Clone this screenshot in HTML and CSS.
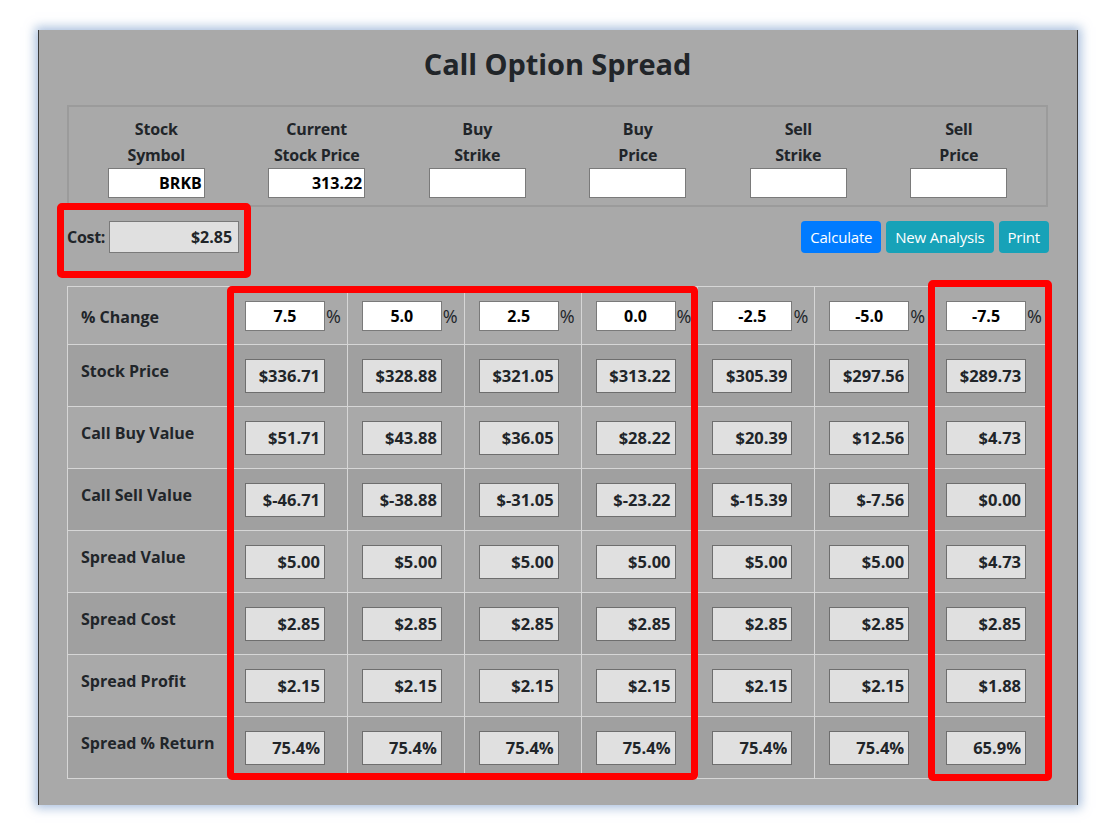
FILE: index.html
```html
<!DOCTYPE html>
<html>
<head>
<meta charset="utf-8">
<link rel="stylesheet" href="styles.css">
</head>
<body>
<div class="window">
  <h2 class="title">Call Option Spread</h2>
  <fieldset class="inputs">
    <div class="field"><label>Stock<br>Symbol</label><input class="in" type="text" value="BRKB"></div>
    <div class="field"><label>Current<br>Stock Price</label><input class="in" type="text" value="313.22"></div>
    <div class="field"><label>Buy<br>Strike</label><input class="in" type="text" value=""></div>
    <div class="field"><label>Buy<br>Price</label><input class="in" type="text" value=""></div>
    <div class="field"><label>Sell<br>Strike</label><input class="in" type="text" value=""></div>
    <div class="field"><label>Sell<br>Price</label><input class="in" type="text" value=""></div>
  </fieldset>
  <div class="costrow">
    <div class="cost"><label>Cost:</label><input class="costin" type="text" value="$2.85" readonly></div>
    <div class="buttons">
      <button class="btn primary">Calculate</button>
      <button class="btn info">New Analysis</button>
      <button class="btn info">Print</button>
    </div>
  </div>
  <table class="grid">
    <thead>
      <tr>
        <th>% Change</th>
        <td><input class="pct" value="7.5"><span class="pc">%</span></td>
        <td><input class="pct" value="5.0"><span class="pc">%</span></td>
        <td><input class="pct" value="2.5"><span class="pc">%</span></td>
        <td><input class="pct" value="0.0"><span class="pc">%</span></td>
        <td><input class="pct" value="-2.5"><span class="pc">%</span></td>
        <td><input class="pct" value="-5.0"><span class="pc">%</span></td>
        <td><input class="pct" value="-7.5"><span class="pc">%</span></td>
      </tr>
    </thead>
    <tbody>
      <tr>
        <th>Stock Price</th>
        <td><input class="val" value="$336.71" readonly></td>
        <td><input class="val" value="$328.88" readonly></td>
        <td><input class="val" value="$321.05" readonly></td>
        <td><input class="val" value="$313.22" readonly></td>
        <td><input class="val" value="$305.39" readonly></td>
        <td><input class="val" value="$297.56" readonly></td>
        <td><input class="val" value="$289.73" readonly></td>
      </tr>
      <tr>
        <th>Call Buy Value</th>
        <td><input class="val" value="$51.71" readonly></td>
        <td><input class="val" value="$43.88" readonly></td>
        <td><input class="val" value="$36.05" readonly></td>
        <td><input class="val" value="$28.22" readonly></td>
        <td><input class="val" value="$20.39" readonly></td>
        <td><input class="val" value="$12.56" readonly></td>
        <td><input class="val" value="$4.73" readonly></td>
      </tr>
      <tr>
        <th>Call Sell Value</th>
        <td><input class="val" value="$-46.71" readonly></td>
        <td><input class="val" value="$-38.88" readonly></td>
        <td><input class="val" value="$-31.05" readonly></td>
        <td><input class="val" value="$-23.22" readonly></td>
        <td><input class="val" value="$-15.39" readonly></td>
        <td><input class="val" value="$-7.56" readonly></td>
        <td><input class="val" value="$0.00" readonly></td>
      </tr>
      <tr>
        <th>Spread Value</th>
        <td><input class="val" value="$5.00" readonly></td>
        <td><input class="val" value="$5.00" readonly></td>
        <td><input class="val" value="$5.00" readonly></td>
        <td><input class="val" value="$5.00" readonly></td>
        <td><input class="val" value="$5.00" readonly></td>
        <td><input class="val" value="$5.00" readonly></td>
        <td><input class="val" value="$4.73" readonly></td>
      </tr>
      <tr>
        <th>Spread Cost</th>
        <td><input class="val" value="$2.85" readonly></td>
        <td><input class="val" value="$2.85" readonly></td>
        <td><input class="val" value="$2.85" readonly></td>
        <td><input class="val" value="$2.85" readonly></td>
        <td><input class="val" value="$2.85" readonly></td>
        <td><input class="val" value="$2.85" readonly></td>
        <td><input class="val" value="$2.85" readonly></td>
      </tr>
      <tr>
        <th>Spread Profit</th>
        <td><input class="val" value="$2.15" readonly></td>
        <td><input class="val" value="$2.15" readonly></td>
        <td><input class="val" value="$2.15" readonly></td>
        <td><input class="val" value="$2.15" readonly></td>
        <td><input class="val" value="$2.15" readonly></td>
        <td><input class="val" value="$2.15" readonly></td>
        <td><input class="val" value="$1.88" readonly></td>
      </tr>
      <tr>
        <th>Spread % Return</th>
        <td><input class="val" value="75.4%" readonly></td>
        <td><input class="val" value="75.4%" readonly></td>
        <td><input class="val" value="75.4%" readonly></td>
        <td><input class="val" value="75.4%" readonly></td>
        <td><input class="val" value="75.4%" readonly></td>
        <td><input class="val" value="75.4%" readonly></td>
        <td><input class="val" value="65.9%" readonly></td>
      </tr>
    </tbody>
  </table>
</div>
<div class="mark mark-cost"></div>
<div class="mark mark-mid"></div>
<div class="mark mark-right"></div>
</body>
</html>
```

FILE: styles.css
```css
* { box-sizing: border-box; }
html, body { margin: 0; padding: 0; background: #ffffff; }
body {
  font-family: "Open Sans", "Noto Sans", "Liberation Sans", sans-serif;
  color: #212529;
  position: relative;
  width: 1113px;
  height: 836px;
  overflow: hidden;
}
.window {
  margin: 30px 0 0 38px;
  width: 1040px;
  height: 775px;
  background: #a9a9a9;
  border-left: 1px solid #3a3a3a;
  border-right: 1px solid #3a3a3a;
  box-shadow: 0 0 10px 3px rgba(140, 170, 210, 0.75);
  padding: 0 29px 0 28px;
  overflow: hidden;
}
.title {
  margin: 0;
  padding-top: 15px;
  height: 75px;
  text-align: center;
  font-size: 29px;
  line-height: 38px;
  font-weight: 700;
  letter-spacing: -0.1px;
}
.inputs {
  margin: 0;
  height: 102px;
  border: 2px solid #9b9b9b;
  padding: 9px 7px 0 7px;
  display: grid;
  grid-template-columns: repeat(6, 1fr);
}
.field {
  display: flex;
  flex-direction: column;
  align-items: center;
}
.field label {
  font-weight: 700;
  font-size: 16px;
  line-height: 26px;
  text-align: center;
  letter-spacing: -0.2px;
}
.in {
  width: 97px;
  height: 30px;
  border: 1px solid #7a7a7a;
  background: #ffffff;
  font-family: inherit;
  font-weight: 700;
  font-size: 16px;
  color: #000;
  text-align: right;
  padding: 0 2px;
}
.costrow {
  display: flex;
  justify-content: space-between;
  align-items: center;
  height: 79px;
  padding-bottom: 20px;
}
.cost {
  display: flex;
  align-items: center;
  gap: 4px;
}
.cost label {
  font-weight: 700;
  font-size: 16px;
  letter-spacing: -0.3px;
}
.costin {
  width: 130px;
  height: 32px;
  background: #e0e0e0;
  border: 1px solid #7a7a7a;
  font-family: inherit;
  font-weight: 700;
  font-size: 16px;
  color: #212529;
  text-align: right;
  padding: 0 6px;
}
.buttons {
  display: flex;
  gap: 5px;
  margin-right: -1px;
}
.btn {
  border: 0;
  border-radius: 4px;
  color: #ffffff;
  font-family: inherit;
  font-size: 15px;
  height: 32px;
  padding: 0 9px;
  letter-spacing: -0.2px;
}
.primary { background: #007bff; }
.info { background: #17a2b8; }
.grid {
  border-collapse: collapse;
  width: 982px;
  table-layout: fixed;
}
.grid th, .grid td {
  border: 1px solid #d6d6d6;
}
.grid th {
  width: 163px;
  text-align: left;
  font-size: 16px;
  font-weight: 700;
  line-height: 24px;
  padding: 14px 13px 0 13px;
  vertical-align: top;
}
.grid td {
  padding: 0 0 0 14px;
  vertical-align: middle;
  white-space: nowrap;
  font-size: 16px;
}
.grid thead tr { height: 58px; }
.grid thead th { padding-top: 18px; }
.grid tbody tr { height: 62px; }
.grid tbody tr:nth-child(odd) { background: #a0a0a0; }
.pct {
  width: 80px;
  height: 30px;
  border: 1px solid #7a7a7a;
  background: #fff;
  font-family: inherit;
  font-weight: 700;
  font-size: 16px;
  color: #000;
  text-align: center;
  padding: 0;
  vertical-align: middle;
}
.pc {
  font-size: 18px;
  margin-left: 1px;
  vertical-align: middle;
  color: #212529;
}
.val {
  width: 80px;
  height: 34px;
  border: 1px solid #6e6e6e;
  background: #e0e0e0;
  font-family: inherit;
  font-weight: 700;
  font-size: 16.5px;
  color: #212529;
  text-align: right;
  padding: 0 4px;
}
.mark {
  position: absolute;
  border: 7px solid #ff0000;
  border-radius: 5px;
}
.mark-cost { left: 57px; top: 203px; width: 194px; height: 75px; }
.mark-mid { left: 227px; top: 286px; width: 471px; height: 494px; }
.mark-right { left: 928px; top: 280px; width: 124px; height: 501px; }
```
